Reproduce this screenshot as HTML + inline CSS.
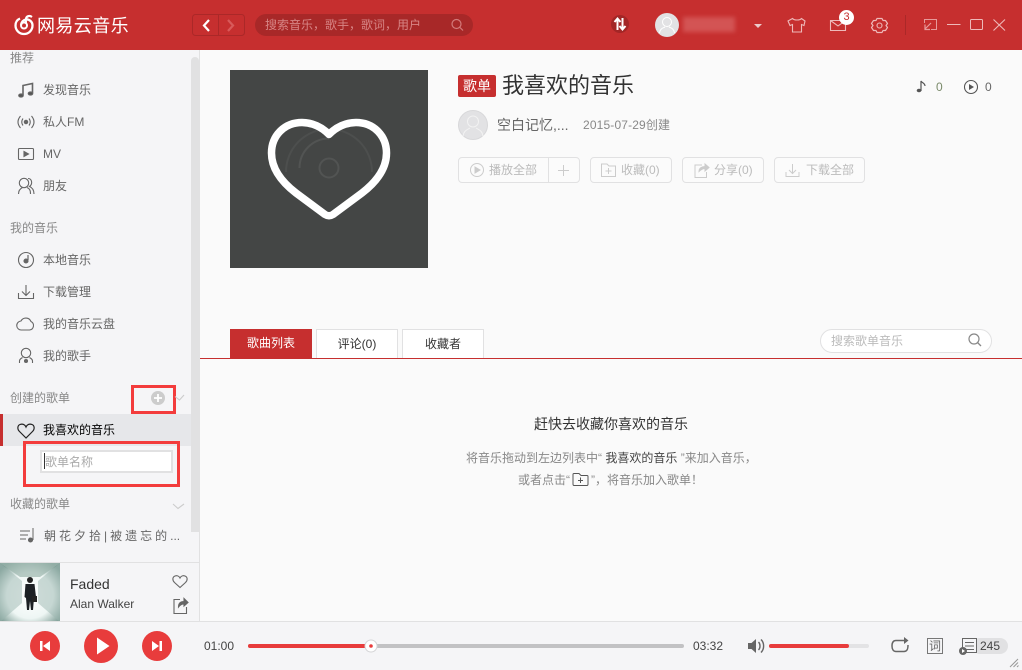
<!DOCTYPE html>
<html lang="zh">
<head>
<meta charset="utf-8">
<title>网易云音乐</title>
<style>
html,body{margin:0;padding:0;width:1022px;height:670px;overflow:hidden;background:#fafafa}
body{position:relative;font-family:"Liberation Sans","Noto Sans CJK SC",sans-serif;font-size:12px;color:#666}
div,span,svg{position:absolute}
.t{white-space:nowrap;line-height:16px;height:16px}
.g{color:#888}
.btn{top:157px;height:24px;border:1px solid #e1e1e2;border-radius:4px;background:#fbfbfb}
.bt{top:162px;color:#bbb}
svg{overflow:visible}
</style>
</head>
<body>
<!-- main bg -->
<div style="left:0;top:50px;width:199px;height:571px;background:#f5f5f7;border-right:1px solid #e1e1e2"></div>
<!-- top bar -->
<div style="left:0;top:0;width:1022px;height:50px;background:#c62f2f"></div>
<svg style="left:0;top:0" width="1022" height="50" fill="none">
 <path d="M20 18.500C16.500 20 15.500 23 15.500 25.500A8.500 8.500 0 0 0 32.500 25.500C32.500 21.500 29 19 26 19.500C23 20 21.500 22.500 21 25" stroke="#fff" stroke-width="2.300"/>
 <circle cx="24" cy="25.500" r="3" stroke="#fff" stroke-width="2"/>
 <path d="M26 23C25.500 20 25.500 16.500 29 16C30 15.800 31 16.300 32 17" stroke="#fff" stroke-width="2.200"/>
 <rect x="192.500" y="14.500" width="52" height="21" rx="3" stroke="#ab2828"/>
 <path d="M218.500 15V35" stroke="#ab2828"/>
 <path d="M209 20L204 25.500L209 31" stroke="#fff" stroke-width="2.200"/>
 <path d="M228 20L233 25.500L228 31" stroke="#d85a5a" stroke-width="2.200"/>
 <rect x="255" y="14" width="218" height="22" rx="11" fill="#a82828"/>
 <circle cx="456.500" cy="24" r="4.500" stroke="#d37a7a" stroke-width="1.200"/>
 <path d="M460 27.500L463 30.500" stroke="#d37a7a" stroke-width="1.200"/>
 <circle cx="620" cy="24" r="9" fill="#a32626"/>
 <path d="M617.500 30V19.500M614.500 22L617.500 18.500L620.500 22M622.500 18V28.500M619.500 26L622.500 29.500L625.500 26" stroke="#fff" stroke-width="2"/>
 <circle cx="667" cy="25" r="12" fill="#e2e2e4"/>
 <circle cx="667" cy="22" r="4.500" stroke="#fff"/>
 <path d="M659.500 33C660 28.500 663 28 665 27M674.500 33C674 28.500 671 28 669 27" stroke="#fff"/>
 <path d="M754 24H762L758 28Z" fill="#eccaca"/>
 <path d="M792.500 18.500L788 21L790 25.500L792.500 24.500V32H801.500V24.500L804 25.500L805 21L801.500 18.500C800 20.500 794 20.500 792.500 18.500Z" stroke="#eeb9b9" stroke-width="1.100"/>
 <path d="M830.500 20.500H845.500V30.500H830.500ZM830.500 20.500L838 26L845 21" stroke="#eeb9b9" stroke-width="1.100"/>
 <path d="M877 18.500H882L883 20.500L885.500 20.500L887.500 23.500L886 25.500L887.500 27.500L885.500 30.500L883 30.500L882 32.500H877L876 30.500L873.500 30.500L871.500 27.500L873 25.500L871.500 23.500L873.500 20.500L876 20.500Z" stroke="#eeb9b9" stroke-width="1.200" stroke-linejoin="round"/>
 <circle cx="879.500" cy="25.500" r="2.500" stroke="#eeb9b9" stroke-width="1.100"/>
 <path d="M905.500 15V35" stroke="#ab2828"/>
 <path d="M924.500 23V19.500H936.500V29.500H931" stroke="#e79a9a"/>
 <path d="M931 23L925 29M925 24.500V29.500H930" stroke="#e79a9a" stroke-width="1.200"/>
 <path d="M947 24.500H960.500" stroke="#eeb9b9"/>
 <rect x="970.500" y="19.500" width="12" height="10" rx="1" stroke="#eeb9b9"/>
 <path d="M993.500 19.500L1005 30.500M1005 19.500L993.500 30.500" stroke="#eeb9b9" stroke-width="1.100"/>
</svg>
<div class="t" style="left:37px;top:15px;height:22px;line-height:22px;font-size:18px;letter-spacing:.4px;color:#fff">网易云音乐</div>
<div class="t" style="left:265px;top:17px;color:#d78585">搜索音乐，歌手，歌词，用户</div>
<div style="left:683px;top:17px;width:52px;height:15px;background:#d35454;filter:blur(2px)"></div>
<div style="left:839px;top:10px;width:15px;height:15px;border-radius:50%;background:#fff;color:#c62f2f;text-align:center;line-height:15px;font-size:11px">3</div>

<!-- sidebar labels -->
<div class="t g" style="left:10px;top:50px">推荐</div>
<div class="t" style="left:43px;top:82px">发现音乐</div>
<div class="t" style="left:43px;top:114px">私人FM</div>
<div class="t" style="left:43px;top:146px">MV</div>
<div class="t" style="left:43px;top:178px">朋友</div>
<div class="t g" style="left:10px;top:220px">我的音乐</div>
<div class="t" style="left:43px;top:252px">本地音乐</div>
<div class="t" style="left:43px;top:284px">下载管理</div>
<div class="t" style="left:43px;top:316px">我的音乐云盘</div>
<div class="t" style="left:43px;top:348px">我的歌手</div>
<div class="t g" style="left:10px;top:390px">创建的歌单</div>
<div style="left:0;top:414px;width:191px;height:32px;background:#e6e7ea"></div>
<div style="left:0;top:414px;width:3px;height:32px;background:#c62f2f"></div>
<div class="t" style="left:43px;top:422px;color:#000">我喜欢的音乐</div>
<div style="left:40px;top:450px;width:129px;height:19px;border:2px solid #e1e1e2;background:#fff"></div>
<div style="left:44px;top:453px;width:1px;height:16px;background:#333"></div>
<div class="t" style="left:45px;top:454px;color:#aaa">歌单名称</div>
<div class="t g" style="left:10px;top:496px">收藏的歌单</div>
<div class="t" style="left:44px;top:528px;letter-spacing:3px">朝花夕拾|被遗忘的<span style="position:static;letter-spacing:0">...</span></div>
<div style="left:191px;top:57px;width:8px;height:475px;border-radius:4px 4px 0 0;background:#e1e1e2"></div>
<div style="left:131px;top:385px;width:39px;height:23px;border:3px solid #f33c3c"></div>
<div style="left:23px;top:441px;width:151px;height:40px;border:3px solid #f33c3c"></div>

<svg style="left:0;top:50px" width="199" height="512" fill="none" stroke="#666" stroke-width="1.100">
 <path d="M23 45V35.500L32.500 33.500V43" stroke-width="1.600"/>
 <ellipse cx="21" cy="45.500" rx="2.300" ry="1.600" fill="#555"/>
 <ellipse cx="30.500" cy="43.500" rx="2.300" ry="1.600" fill="#555"/>
 <circle cx="26" cy="72" r="1.700" fill="#666"/>
 <path d="M23 68.500Q20.500 72 23 75.500M29 68.500Q31.500 72 29 75.500M20.500 66Q15.500 72 20.500 78M31.500 66Q36.500 72 31.500 78"/>
 <rect x="18.500" y="98.500" width="15" height="11" rx="1"/>
 <path d="M24 101.500L28.500 104L24 106.500Z" fill="#666"/>
 <circle cx="24" cy="133" r="4.700"/>
 <path d="M18.500 144C18.500 140 20.500 138.500 22.500 137.500M27 137.500C29.500 138.500 30.500 140 30.500 144M28 128.500C32 128.500 33 134 29.500 136.500C32 137.500 34 140 34 144"/>
 <circle cx="26" cy="210" r="7.500"/>
 <path d="M28 205V210" stroke-width="1.200"/>
 <circle cx="26" cy="211" r="2" fill="#666"/>
 <path d="M26 235V245M22 241.500L26 245.500L30 241.500M18.500 243V248.500H33.500V243"/>
 <path d="M21.500 280H29.500A4.500 4.500 0 0 0 31 271.500A5.500 5.500 0 0 0 21 271A4.500 4.500 0 0 0 21.500 280Z"/>
 <circle cx="26" cy="303" r="4.700"/>
 <path d="M19.500 313V311C19.500 309 21 308.500 22.500 307.500M29.500 307.500C31 308.500 32.500 309 32.500 311V313"/>
 <circle cx="26" cy="311" r="1.500" fill="#666"/>
 <path d="M26 388L19.500 381.500C17 379 17.500 375.500 20 374.500C22.500 373.500 25 374.500 26 377C27 374.500 29.500 373.500 32 374.500C34.500 375.500 35 379 32.500 381.500Z" stroke="#222" stroke-width="1.200"/>
 <path d="M173 454L178 458.500L184 454" stroke="#ccc"/>
 <path d="M20 481H30M20 485H28M20 489H26M33 478V490" stroke-width="1"/>
 <circle cx="30.500" cy="490" r="2" fill="#666"/>
 <path d="M175 346.500L179.500 350L184 345" stroke="#ccc"/>
 <circle cx="158" cy="348" r="7" fill="#ccc" stroke="none"/>
 <path d="M158 344V352M154 348H162" stroke="#fff" stroke-width="1.800"/>
</svg>

<!-- mini player -->
<div style="left:0;top:562px;width:199px;height:59px;background:#f5f5f7;border-top:1px solid #e1e1e2"></div>
<svg style="left:0;top:563px" width="60" height="59">
 <defs>
  <radialGradient id="a" cx="50%" cy="55%" r="65%"><stop offset="0" stop-color="#fff"/><stop offset=".6" stop-color="#eef6f4"/><stop offset="1" stop-color="#7b9b93"/></radialGradient>
 </defs>
 <rect width="60" height="59" fill="url(#a)"/>
 <path d="M0 0L22 18V40L0 59ZM60 0L38 18V40L60 59Z" fill="#9db8b1" opacity=".5"/>
 <path d="M0 0H60L40 14H20Z" fill="#9db7ae" opacity=".7"/>
 <circle cx="30" cy="17" r="3" fill="#222"/>
 <path d="M25.500 21H34.500L36 34L34 35L33 47H31L30 38L29 47H27L26 35L24.500 34Z" fill="#1c2024"/>
 <rect x="32" y="33" width="5" height="6" fill="#222"/>
</svg>
<div class="t" style="left:70px;top:576px;font-size:14px;color:#333">Faded</div>
<div class="t" style="left:70px;top:596px;color:#444">Alan Walker</div>
<svg style="left:0;top:0" width="200" height="621" fill="none" stroke="#666" stroke-width="1.100">
 <path d="M180 587.500L174.500 582.500C172 580 172.500 577 175 576C177 575.300 179 576 180 578C181 576 183 575.300 185 576C187.500 577 188 580 185.500 582.500Z"/>
 <path d="M180 599.500H174V613.500H186.500V607"/>
 <path d="M178.500 607C178.500 603 181 601.500 184 601.500V598.500L188 602.500L184 606V604C182 604 180 605 178.500 607Z" fill="#666"/>
</svg>

<!-- main content -->
<svg style="left:230px;top:70px" width="198" height="198" viewBox="230 70 198 198" fill="none">
 <rect x="230" y="70" width="198" height="198" fill="#444645"/>
 <circle cx="329" cy="168" r="9.500" stroke="#525453" stroke-width="2"/>
 <path d="M299.500 168A29.500 29.500 0 0 1 329 138.500" stroke="#525453" stroke-width="2"/>
 <path d="M286 172A43 43 0 0 1 372 172" stroke="#4d4f4e" stroke-width="2"/>
 <path d="M329 134.500C322 127 312 122.500 302 122.500C284 122.500 271.500 136 271.500 153C271.500 170 283 183 296 193L325 214.500Q329 217 333 214.500L362 193C375 183 386.500 170 386.500 153C386.500 136 374 122.500 356 122.500C346 122.500 336 127 329 134.500Z" stroke="#fff" stroke-width="7.500" stroke-linejoin="round"/>
</svg>
<div style="left:458px;top:75px;width:38px;height:22px;border-radius:2px;background:#c62f2f;color:#fff;font-size:14px;line-height:22px;text-align:center">歌单</div>
<div class="t" style="left:502px;top:72px;height:28px;line-height:28px;font-size:22px;color:#333">我喜欢的音乐</div>
<div class="t" style="left:497px;top:117px;font-size:14px">空白记忆,...</div>
<div class="t" style="left:583px;top:117px;color:#888;letter-spacing:.15px">2015-07-29创建</div>
<div class="btn" style="left:458px;width:120px"></div>
<div style="left:548px;top:158px;width:1px;height:24px;background:#e1e1e2"></div>
<div class="btn" style="left:590px;width:80px"></div>
<div class="btn" style="left:682px;width:80px"></div>
<div class="btn" style="left:774px;width:89px"></div>
<div class="t bt" style="left:489px">播放全部</div>
<div class="t bt" style="left:621px">收藏(0)</div>
<div class="t bt" style="left:714px">分享(0)</div>
<div class="t bt" style="left:806px">下载全部</div>
<div class="t" style="left:936px;top:79px;color:#7a8a6a">0</div>
<div class="t" style="left:985px;top:79px;color:#666">0</div>
<svg style="left:0;top:0" width="1022" height="670" fill="none" stroke="#ccc" stroke-width="1">
 <circle cx="473" cy="125" r="14.500" fill="#e2e2e4" stroke="#d8d8da"/>
 <circle cx="473" cy="121.500" r="5.500" stroke="#f2f2f2"/>
 <path d="M463 136C464 130 468 129.500 470 128M483 136C482 130 478 129.500 476 128" stroke="#f2f2f2"/>
 <circle cx="477" cy="170" r="6.500"/>
 <path d="M475 167L480 170L475 173Z" fill="#ccc"/>
 <path d="M563.500 165V176M558 170.500H569"/>
 <path d="M601.500 176.500V164H607L609 166H615.500V176.500Z"/>
 <path d="M608.500 168V174M605.500 171H611.500"/>
 <path d="M702 165H695V177.500H706.500V172"/>
 <path d="M699 171.500C699 168 702 166.500 705 166.500V164L709 167.500L705 171V168.500C703 168.500 701 169.500 699 171.500Z" fill="#ccc"/>
 <path d="M792.500 164V173M789 170L792.500 173.500L796 170M786 172V176.500H799V172"/>
 <path d="M921 91V81C922 83 925 83 925 86" stroke="#555" stroke-width="1.200"/>
 <ellipse cx="919" cy="90.500" rx="2.300" ry="1.800" fill="#555" stroke="none"/>
 <circle cx="971" cy="87" r="6.500" stroke="#555" stroke-width="1.100"/>
 <path d="M969 84L974 87L969 90Z" fill="#555" stroke="none"/>
 <path d="M574 485.500Q573 485.500 573 484V474.500Q573 473.500 574 473.500H579L581 475.500H587Q588 475.500 588 476.500V484Q588 485.500 587 485.500Z" stroke="#555"/>
 <path d="M580.500 477.500V483M578 480.500H583" stroke="#555"/>
</svg>

<!-- tabs -->
<div style="left:200px;top:358px;width:822px;height:1px;background:#c62f2f"></div>
<div style="left:230px;top:329px;width:82px;height:29px;background:#c62f2f;color:#fff;text-align:center;line-height:29px">歌曲列表</div>
<div style="left:316px;top:329px;width:80px;height:28px;border:1px solid #e1e1e2;border-bottom:0;background:#fff;color:#333;text-align:center;line-height:29px">评论(0)</div>
<div style="left:402px;top:329px;width:80px;height:28px;border:1px solid #e1e1e2;border-bottom:0;background:#fff;color:#333;text-align:center;line-height:29px">收藏者</div>
<div style="left:820px;top:329px;width:170px;height:22px;border:1px solid #e1e1e2;border-radius:12px;background:#fff"></div>
<div class="t" style="left:831px;top:333px;color:#bbb">搜索歌单音乐</div>
<svg style="left:966px;top:331px" width="20" height="20" fill="none">
 <circle cx="8" cy="8" r="5" stroke="#888" stroke-width="1.200"/>
 <path d="M11.500 11.500L15 15" stroke="#888" stroke-width="1.300"/>
</svg>

<!-- empty state -->
<div class="t" style="left:534px;top:416px;font-size:14px;color:#333">赶快去收藏你喜欢的音乐</div>
<div class="t" style="left:466px;top:450px;color:#888">将音乐拖动到左边列表中“ <span style="position:static;color:#444">我喜欢的音乐</span> ”来加入音乐，</div>
<div class="t" style="left:518px;top:472px;color:#888">或者点击“</div>
<div class="t" style="left:591px;top:472px;color:#888">”，将音乐加入歌单！</div>

<!-- bottom bar -->
<div style="left:0;top:621px;width:1022px;height:49px;background:#f5f5f7;border-top:1px solid #e1e1e2;box-sizing:border-box"></div>
<svg style="left:0;top:0" width="1022" height="670" fill="none">
 <circle cx="45" cy="646" r="15" fill="#e83c3c"/>
 <circle cx="101" cy="646" r="17" fill="#e83c3c"/>
 <circle cx="157" cy="646" r="15" fill="#e83c3c"/>
 <path d="M40 641H42.500V651H40ZM50 641V651L43 646Z" fill="#fff"/>
 <path d="M97 637.500V654.500L109.500 646Z" fill="#fff"/>
 <path d="M152 641V651L159 646ZM159.500 641H162V651H159.500Z" fill="#fff"/>
 <rect x="248" y="644" width="436" height="4" rx="2" fill="#c2c2c4"/>
 <rect x="248" y="644" width="122" height="4" rx="2" fill="#e83c3c"/>
 <circle cx="371" cy="646" r="6" fill="#fff" stroke="#d5d5d7"/>
 <circle cx="371" cy="646" r="1.800" fill="#e83c3c"/>
 <path d="M748 643H751.500L756 639V653L751.500 649H748Z" fill="#666"/>
 <path d="M758.500 642C760.500 644 760.500 648 758.500 650M761 639.500C764.500 643 764.500 649 761 652.500" stroke="#666" stroke-width="1.400"/>
 <rect x="769" y="644" width="100" height="4" rx="2" fill="#e3e3e5"/>
 <rect x="769" y="644" width="80" height="4" rx="2" fill="#e83c3c"/>
 <path d="M905 640.500H896C893 640.500 892 642.500 892 646C892 649.500 893.500 651.500 896 651.500H904C907 651.500 908 649.500 908 645" stroke="#666" stroke-width="1.500"/>
 <path d="M904 637L908.500 640.500L904 644Z" fill="#666"/>
 <rect x="927.500" y="638.500" width="15" height="15" stroke="#777"/>
 <rect x="972" y="638" width="36" height="16" rx="8" fill="#e1e1e3"/>
 <rect x="962.500" y="638.500" width="14" height="14" fill="#f5f5f7" stroke="#666"/>
 <path d="M965 642.500H974M965 646H974M965 649.500H974" stroke="#666"/>
 <circle cx="963" cy="651" r="4" fill="#666"/>
 <path d="M962 649L965 651L962 653Z" fill="#fff"/>
 <path d="M1010 667L1018 659M1013.500 667L1018 662.500M1017 667L1018.500 665.500" stroke="#999"/>
</svg>
<div class="t" style="left:204px;top:638px;color:#444">01:00</div>
<div class="t" style="left:693px;top:638px;color:#444">03:32</div>
<div class="t" style="left:929px;top:638px;color:#666;width:12px;text-align:center">词</div>
<div class="t" style="left:980px;top:638px;color:#444">245</div>
</body>
</html>
